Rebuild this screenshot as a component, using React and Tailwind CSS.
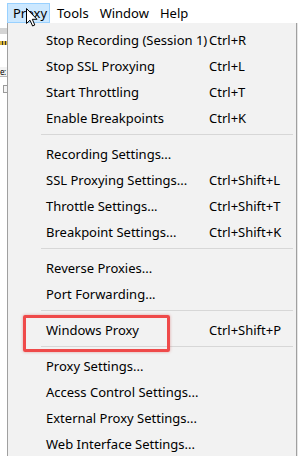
const menuGroups = [
  [
    { label: "Stop Recording (Session 1)", key: "Ctrl+R" },
    { label: "Stop SSL Proxying", key: "Ctrl+L" },
    { label: "Start Throttling", key: "Ctrl+T" },
    { label: "Enable Breakpoints", key: "Ctrl+K" },
  ],
  [
    { label: "Recording Settings..." },
    { label: "SSL Proxying Settings...", key: "Ctrl+Shift+L" },
    { label: "Throttle Settings...", key: "Ctrl+Shift+T" },
    { label: "Breakpoint Settings...", key: "Ctrl+Shift+K" },
  ],
  [{ label: "Reverse Proxies..." }, { label: "Port Forwarding..." }],
  [{ label: "Windows Proxy", key: "Ctrl+Shift+P" }],
  [
    { label: "Proxy Settings..." },
    { label: "Access Control Settings..." },
    { label: "External Proxy Settings..." },
    { label: "Web Interface Settings..." },
  ],
];

function MenuRow({ item }) {
  return (
    <div className="flex h-[26px] items-center pl-[38px]">
      <span className="w-[163px] whitespace-nowrap">{item.label}</span>
      <span className="whitespace-nowrap">{item.key}</span>
    </div>
  );
}

function Separator() {
  return (
    <div className="h-[10px] pt-[3px] pl-[33px] pr-[3px]">
      <div className="h-px bg-[#d7d7d7]" />
    </div>
  );
}

function Cursor() {
  return (
    <svg
      className="absolute left-[26px] top-[8px]"
      width="13"
      height="19"
      viewBox="0 0 13 19"
    >
      <path
        d="M0.5 0.5 L0.5 15.5 L4 12.2 L6.6 18 L8.8 17 L6.3 11.3 L11 11.3 Z"
        fill="#fff"
        stroke="#000"
        strokeWidth="1"
        strokeLinejoin="round"
      />
    </svg>
  );
}

export default function App() {
  return (
    <div className="relative h-[456px] w-[298px] overflow-hidden bg-white font-['Noto_Sans',sans-serif] text-[13px] leading-none text-black">
      {/* menu bar */}
      <div className="flex h-[23px] items-end">
        <div className="ml-[7px] flex h-[20px] w-[43px] items-center border border-[#99d1ff] bg-[#cce8ff] pl-[5px]">
          Proxy
        </div>
        <div className="flex h-[20px] items-center pl-[7px]">Tools</div>
        <div className="flex h-[20px] items-center pl-[11px]">Window</div>
        <div className="flex h-[20px] items-center pl-[11px]">Help</div>
      </div>

      <div className="flex">
        {/* window behind the menu */}
        <div className="flex w-[7px] flex-col bg-white">
          <div className="mt-[5px] h-[6px] bg-[#d4d4d4]" />
          <div className="mt-[7px] h-[4px] bg-[repeating-linear-gradient(90deg,#d9b43a_0_2px,#3a3a3a_2px_3px)]" />
          <div className="mt-[22px] flex h-[9px] items-center bg-[#f3f3f3] text-[8px] leading-none tracking-tighter">
            e:
          </div>
          <div className="h-px bg-[#b9b9b9]" />
          <div className="mt-[8px] ml-[3px] h-[8px] w-[4px] border border-r-0 border-[#9a9a9a] bg-[#f4f4f4]" />
        </div>

        {/* dropdown menu */}
        <div className="h-[433px] w-[290px] border-x border-[#a0a0a0] bg-[#f2f2f2] pt-[4px]">
          {menuGroups.map((group, i) => (
            <div key={i}>
              {i > 0 && <Separator />}
              {group.map((item) => (
                <MenuRow key={item.label} item={item} />
              ))}
            </div>
          ))}
        </div>

        <div className="w-px bg-[#e6e6e6]" />
      </div>

      {/* annotation box around Windows Proxy */}
      <div className="absolute left-[23px] top-[315px] h-[37px] w-[147px] rounded-[2px] border-[3px] border-[#ef4a4a] shadow-[0_0_3px_rgba(200,60,60,0.45)]" />

      <Cursor />
    </div>
  );
}
